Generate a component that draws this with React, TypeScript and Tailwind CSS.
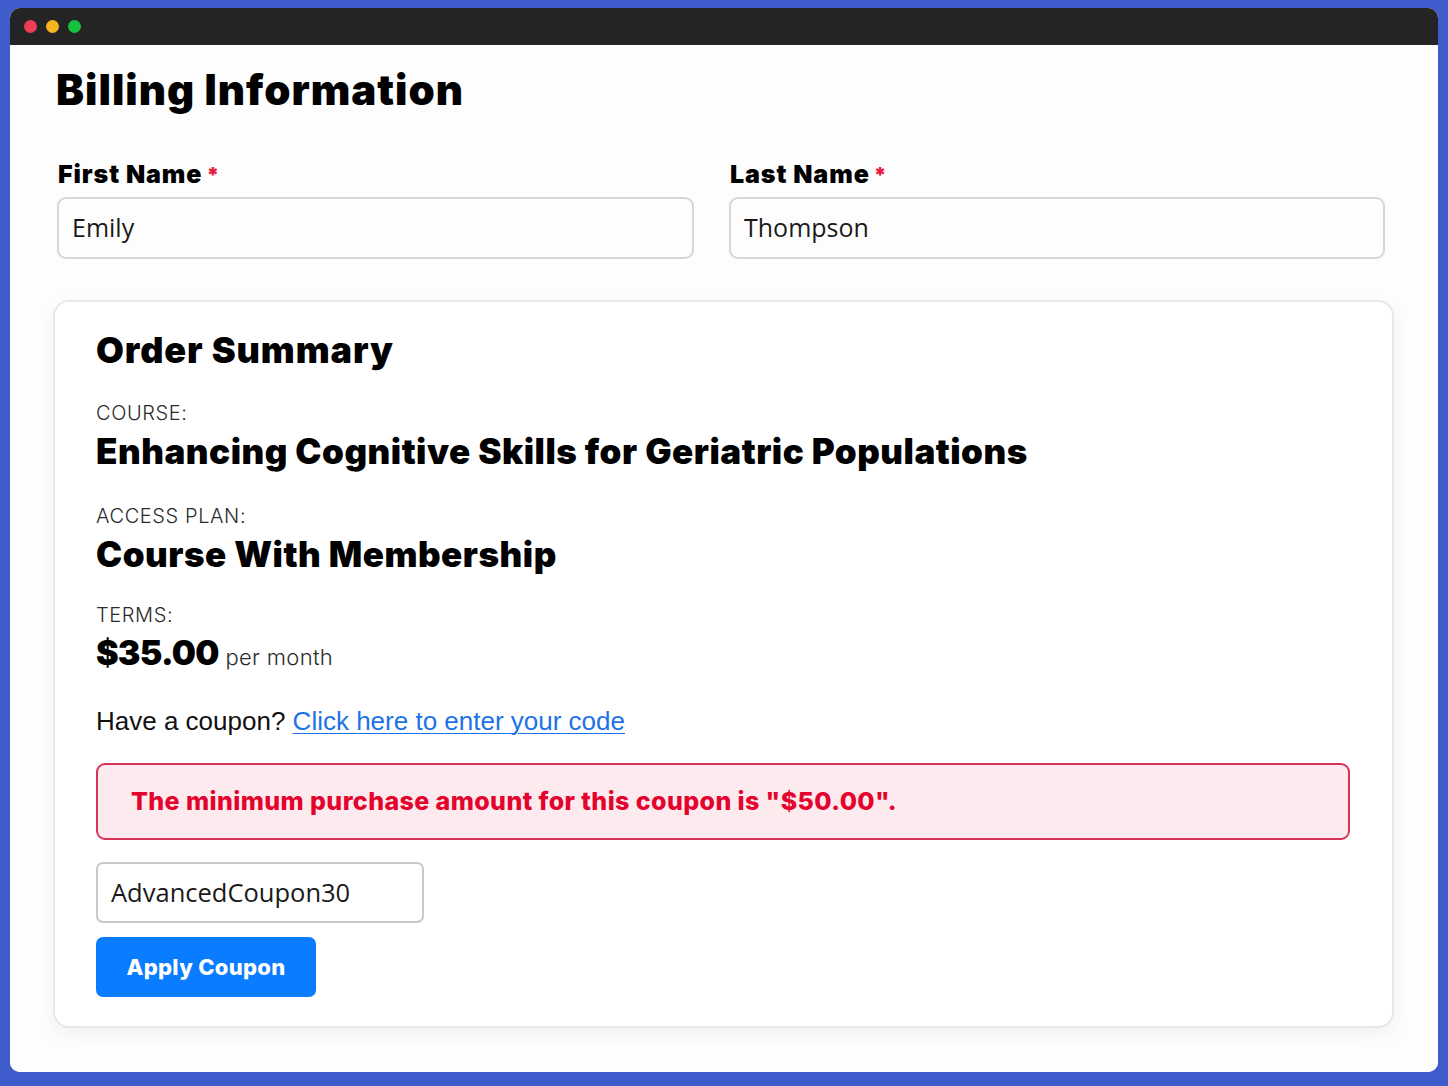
import React from 'react'

const heading = "font-['Inter',sans-serif] font-black text-black"
const light = "font-['Inter',sans-serif] font-light text-[#2b2b2b]"

function Field({ label, value, className }: { label: string; value: string; className: string }) {
  return (
    <div className={className}>
      <label className={`${heading} flex items-center text-[25px] leading-none mb-[10px] pl-[1px] tracking-[0.9px]`}>
        {label}
        <span className="text-[#e8173f] text-[21px] leading-none ml-[4px] mt-[2px]">*</span>
      </label>
      <div className="h-[62px] border-2 border-[#d6d6d6] rounded-[9px] flex items-center px-[13px] font-['Open_Sans',sans-serif] text-[25px] text-[#1a1a1a]">
        {value}
      </div>
    </div>
  )
}

export default function App() {
  return (
    <div className="w-full h-[1086px] bg-[#3e5ccb] pt-[8px] px-[10px] pb-[14px]">
      <div className="h-full bg-white rounded-[10px] overflow-hidden flex flex-col">
        {/* title bar */}
        <div className="h-[37px] bg-[#242424] flex items-center gap-[9px] pl-[14px] shrink-0">
          <span className="w-[13px] h-[13px] rounded-full bg-[#ee3d55]" />
          <span className="w-[13px] h-[13px] rounded-full bg-[#f6b420]" />
          <span className="w-[13px] h-[13px] rounded-full bg-[#16c13e]" />
        </div>

        <div className="flex-1 bg-[#fdfdfd] pl-[43px] pr-[44px]">
          <h1 className={`${heading} text-[42px] leading-none mt-[24px] ml-[3px] tracking-[1px]`}>Billing Information</h1>

          <div className="flex gap-[35px] mt-[51px] ml-[4px] mr-[9px]">
            <Field className="w-[637px]" label="First Name" value="Emily" />
            <Field className="flex-1" label="Last Name" value="Thompson" />
          </div>

          <div className="mt-[41px] border-2 border-[#e8e8e8] rounded-[16px] bg-white shadow-[0_6px_18px_rgba(0,0,0,0.05)] pl-[41px] pr-[42px] pt-[30px] pb-[29px]">
            <h2 className={`${heading} text-[36px] leading-none tracking-[0.9px]`}>Order Summary</h2>

            <div className={`${light} text-[20px] leading-none tracking-[0.6px] mt-[35px]`}>COURSE:</div>
            <div className={`${heading} text-[35px] leading-none tracking-[0.5px] mt-[11px]`}>Enhancing Cognitive Skills for Geriatric Populations</div>

            <div className={`${light} text-[20px] leading-none tracking-[0.6px] mt-[37px]`}>ACCESS PLAN:</div>
            <div className={`${heading} text-[35px] leading-none tracking-[0.5px] mt-[11px]`}>Course With Membership</div>

            <div className={`${light} text-[20px] leading-none tracking-[0.6px] mt-[33px]`}>TERMS:</div>
            <div className="flex items-baseline gap-[7px] mt-[11px]">
              <span className={`${heading} text-[34px] leading-none tracking-[-0.8px]`}>$35.00</span>
              <span className={`${light} text-[22px] leading-none tracking-[0.3px]`}>per month</span>
            </div>

            <p className="font-['Liberation_Sans',sans-serif] text-[26px] leading-none text-[#111] mt-[38px]">
              Have a coupon?{' '}
              <a href="#" className="text-[#1d73e6] underline underline-offset-[3px] decoration-1">Click here to enter your code</a>
            </p>

            <div className="mt-[29px] h-[77px] border-2 border-[#d8345a] rounded-[9px] bg-[#fdeaee] flex items-center pl-[33px]">
              <span className="font-['Inter',sans-serif] font-extrabold text-[25px] tracking-[0.4px] text-[#e3032d]">
                The minimum purchase amount for this coupon is "$50.00".
              </span>
            </div>

            <div className="mt-[22px] w-[328px] h-[61px] border-2 border-[#c8c8c8] rounded-[7px] flex items-center px-[13px] font-['Open_Sans',sans-serif] text-[25.5px] text-[#1a1a1a]">
              AdvancedCoupon30
            </div>

            <button className="mt-[14px] w-[220px] h-[60px] rounded-[7px] bg-[#0a7cff] text-white font-['Inter',sans-serif] font-extrabold text-[22px] tracking-[0.3px] flex items-center justify-center">
              Apply Coupon
            </button>
          </div>
        </div>
      </div>
    </div>
  )
}
